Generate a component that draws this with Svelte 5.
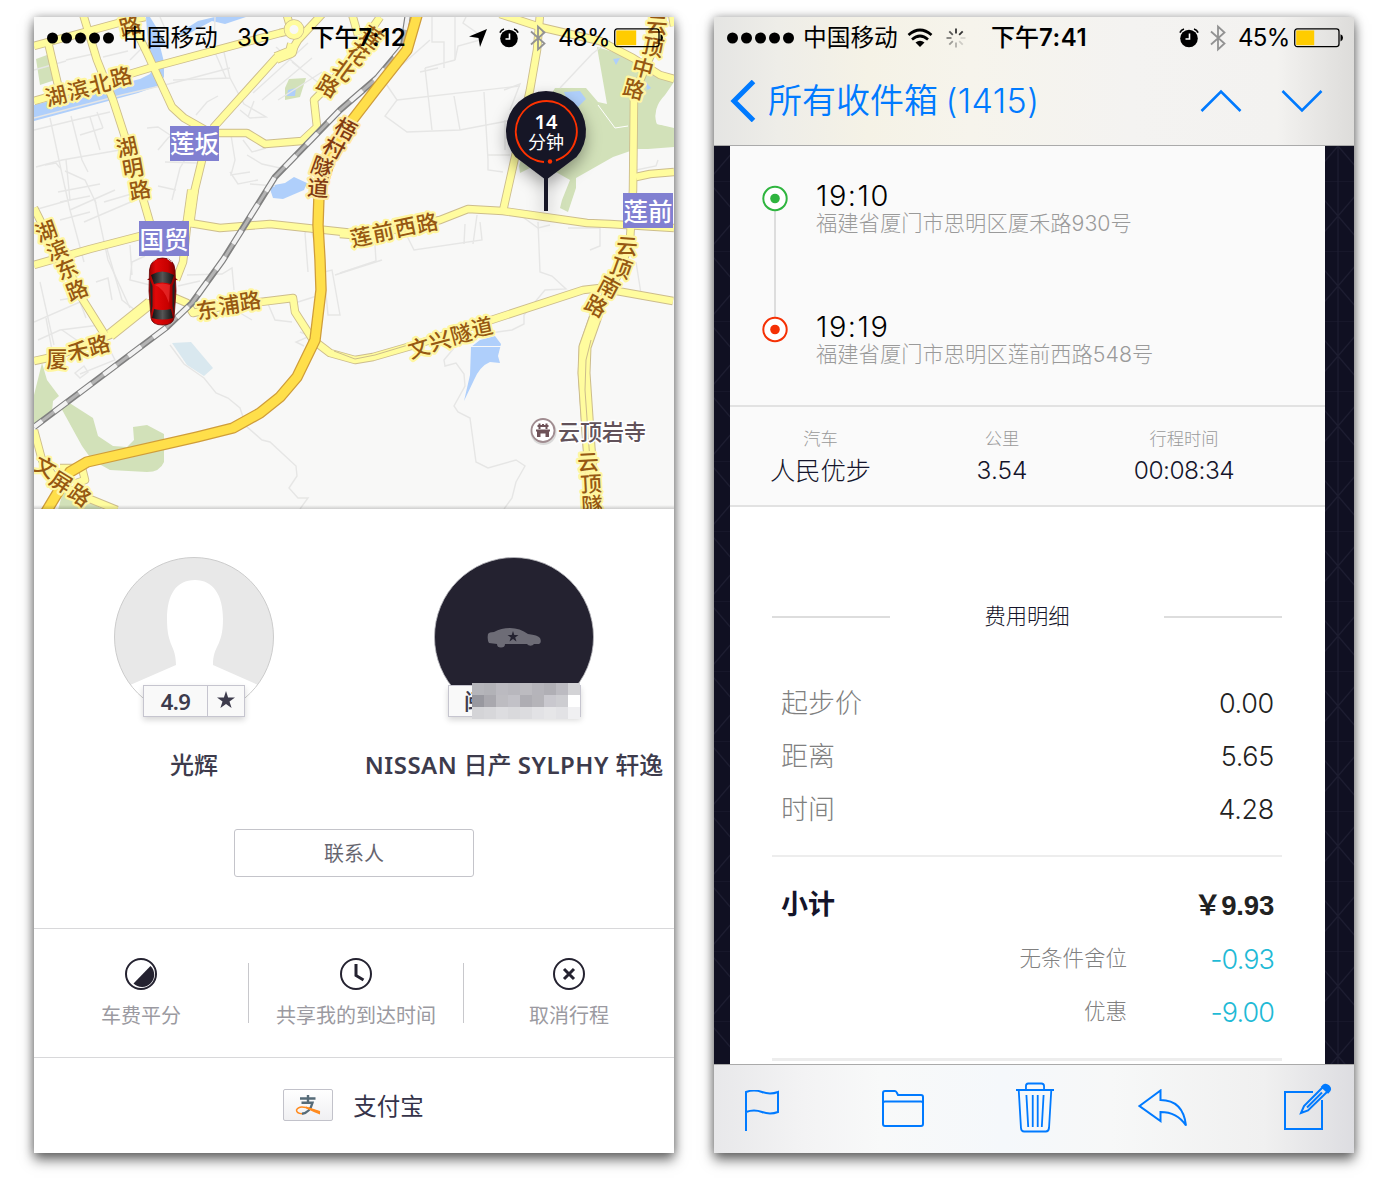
<script>
  // One entry per map label: glyph, centre x, centre y, rotation
  const roadLabels = [
    ['湖', 56, 96, -14], ['滨', 78, 90, -14], ['北', 100, 84, -14], ['路', 121, 77, -14],
    ['湖', 127, 147, -13], ['明', 133, 168, -10], ['路', 140, 190, -10],
    ['湖', 46, 231, -20], ['滨', 57, 250, -20], ['东', 67, 269, -22], ['路', 77, 290, -22],
    ['路', 130, 26, -15],
    ['莲', 372, 37, 36], ['花', 358, 54, 36], ['北', 344, 70, 36], ['路', 328, 86, 30],
    ['莲', 361, 237, -12], ['前', 383, 232, -12], ['西', 405, 227, -12], ['路', 427, 223, -12],
    ['云', 657, 25, 4], ['顶', 653, 47, 12], ['中', 643, 68, 15], ['路', 634, 89, 15],
    ['云', 627, 246, 4], ['顶', 621, 268, 20], ['南', 609, 287, 28], ['路', 596, 306, 28],
    ['东', 207, 310, -9], ['浦', 229, 305, -9], ['路', 250, 301, -9],
    ['厦', 57, 359, 0], ['禾', 78, 351, -12], ['路', 99, 345, -16],
    ['文', 419, 348, -17], ['兴', 440, 341, -15], ['隧', 461, 334, -15], ['道', 482, 327, -12],
    ['云', 588, 462, -3], ['顶', 591, 484, -3], ['隧', 592, 505, -3],
    ['文', 45, 467, 28], ['屏', 61, 482, 32], ['路', 80, 495, 35]
  ];
  const tunnelLabels = [['梧', 346, 129, 28], ['村', 334, 148, 28], ['隧', 322, 167, 20], ['道', 318, 188, 4]];

  const minorRoads = [
    'M66 61 34 70', 'M66 60 93 54', 'M103 57 128 51', 'M34 118 122 95 173 83 230 68',
    'M50 118 60 165 70 210 84 262', 'M36 167 62 160 120 150', 'M71 116 82 160 88 172', 'M34 130 75 120 110 112',
    'M90 117 100 150', 'M97 112 103 128M80 135 103 128M45 165 56 163 60 168', 'M65 171 85 180 96 203M58 192 100 184M60 202 90 196',
    'M70 210 115 190M84 222 140 198M95 200 108 260 130 308', 'M60 220 90 212M104 202 145 190', 'M147 128 158 127 170 135 180 129 168 138 158 150',
    'M173 80 230 78 223 48', 'M214 50 226 78M230 78 244 104 266 117 250 118 240 110', 'M196 115 207 102 218 96',
    'M253 93 308 43M262 100 312 58M278 100 322 72M292 62 320 84', 'M276 47 300 68', 'M254 101 248 117',
    'M172 200 180 168 186 158M176 190 158 186M165 162 198 163', 'M231 135 235 160 231 175 250 172M243 140 252 152 266 148M247 155 262 164 280 168',
    'M230 172 238 184 258 180M250 184 275 186', 'M130 245 132 275M145 256 132 262 130 280 162 288', 'M34 322 80 302 86 318M38 340 60 330 100 325',
    'M40 282 54 345M96 282 108 278 112 300M60 300 90 295M105 242 122 300 140 314', 'M62 330 88 348M75 373 84 366 88 372 80 378Z',
    'M187 275 222 274 232 268 234 290M178 286 200 281', 'M324 272 332 270 340 315 328 315Z M335 275 382 260M300 332 310 336 296 342 304 346',
    'M265 297 275 320 292 322M235 310 252 320', 'M298 302 320 295', 'M314 240 310 226 305 233 308 272',
    'M170 345 184 364 204 378 216 393 228 398 240 408 246 426 262 440 270 442 296 466 297 476 289 488 298 498 308 498 300 509',
    'M378 72 397 100 385 116 407 132 460 130 513 120', 'M397 100 520 86M484 92 488 160 488 170 503 172', 'M425 68 432 130M454 96 460 130',
    'M425 68 455 60M432 17 432 42 444 42 444 68M455 60 458 46 480 40', 'M480 35 463 23 466 17M455 17 455 60M430 40 396 70M420 72 438 68',
    'M504 90 520 84 510 110M505 120 505 150M488 155 510 155', 'M560 88 592 54 610 40', 'M340 273 376 261 374 230',
    'M405 232 414 250 482 240 480 222M465 224 464 244M477 215 473 244', 'M538 222 540 272 552 276 566 289 545 290 535 302 524 315 524 324 512 330 490 333',
    'M454 348 444 360 445 366 456 363 464 374 465 386 454 406 458 412 470 418 476 462 488 468 516 460 525 466 516 482 512 498 504 509',
    'M636 262 642 300M568 228 600 228 600 246 590 250M520 215 538 228 550 225', 'M636 170 656 166 658 160',
    'M105 340 115 360 80 374M46 318 52 350', 'M160 17 170 40M215 17 214 50M150 40 130 60', 'M34 210 70 200 66 160'
  ];

  const secondary = [
    'M34 46 122 22 145 17', 'M48 42 58 85', 'M83 14 97 60 113 100 127 143 152 230', 'M128 14 147 53 172 107 184 118 207 131',
    'M34 101 133 73 153 67 280 33 293 30', 'M324 12 298 40 291 52 276 58 213 128', 'M286 12 290 26',
    'M216 133 247 133 265 144 302 141 317 127 314 100 328 86 350 60 380 17', 'M202 160 193 197 187 226 183 262 176 280',
    'M34 265 90 249 140 236 190 223 220 228 270 224 353 233', 'M340 234 365 236 440 220 468 209 503 211 587 223 610 224 674 228',
    'M34 208 46 232 68 268 83 300 105 335', 'M34 361 57 356 110 335 150 303 173 297 187 303 193 313 220 307 293 298 295 312 313 340 330 353 355 360 373 357 418 344 583 290 600 288 673 301',
    'M664 14 655 45 634 95 633 190 630 240 620 272 595 312 583 347 582 373 587 447 592 509',
    'M500 14 540 27 600 41 633 58 660 75 674 79', 'M540 14 537 50 530 90 503 211', 'M636 177 650 174 674 172', 'M34 430 42 460 60 485 90 499 117 510', 'M60 468 82 468 85 480 74 484', 'M352 14 358 35', 'M672 14 674 26'
  ];
  const wide = ['M293 44 291 52 276 58', 'M193 190 188 226', 'M110 335 150 303'];
  const highway = 'M418 12 407 50 377 88 350 123 330 160 319 195 318 225 320 260 321 290 315 340 297 377 280 397 260 413 233 428 197 437 87 462 70 472 46 512';
  const railway = 'M408 14 403 47 377 78 340 110 275 177 223 260 192 303 167 327 34 427';

  const mosaic = [
    '#b5b5ba', '#b2b2b7', '#bbbac0', '#b8b7bd', '#bcbbc0', '#b5b4ba', '#b0afb5', '#bcbbc1', '#d3d3d6',
    '#98989f', '#a9a8ae', '#bdbcc1', '#c2c1c7', '#aeadb3', '#b5b4b9', '#c9c8ce', '#cdcdd1', '#ffffff',
    '#d4d4d7', '#d7d7da', '#dddde0', '#d9d9dc', '#dcdcdf', '#e2e2e5', '#e6e6e8', '#e2e2e5', '#f0f0f2'
  ];

  const fares = [['起步价', '0.00'], ['距离', '5.65'], ['时间', '4.28']];
  const discounts = [['无条件舍位', '-0.93'], ['优惠', '-9.00']];
  const spokes = [0, 45, 90, 135, 180, 225, 270, 315];
</script>

{#snippet alarm()}
  <svg class="alarm" width="20" height="20" viewBox="0 0 20 20">
    <circle cx="10" cy="10.5" r="8.8" />
    <path d="M.9 4.6Q2 1.8 5 1M19.100 4.600Q18 1.800 15 1" fill="none" stroke="#000" stroke-width="1.6" />
    <path d="M10.500 5.500V11H6.500" fill="none" stroke="#fff" stroke-width="1.600" />
  </svg>
{/snippet}

{#snippet bluetooth()}
  <svg class="bt" width="16" height="28" viewBox="0 0 16 28">
    <path d="M1 7.500 14.500 19.500 8 25.500V2.500L14.500 8.500 1 20.500" fill="none" stroke="#929292" stroke-width="1.800" />
  </svg>
{/snippet}

{#snippet battery(level)}
  <svg class="battery" width="50" height="20" viewBox="0 0 50 20">
    <rect x=".7" y=".9" width="44.300" height="17.700" rx="2.500" fill="none" stroke="#000" stroke-width="1.300" />
    <rect x="2.200" y="2.400" width={level} height="14.800" fill="#fc0" />
    <path d="M46.500 6.200Q49 7 49 9.800T46.500 13.400Z" />
  </svg>
{/snippet}

{#snippet dots()}
  <svg class="dots" width="68" height="12" viewBox="0 0 68 12">
    {#each [5.5, 19.500, 33.500, 47.500, 61.500] as cx}<circle {cx} cy="6" r="5.500" />{/each}
  </svg>
{/snippet}

<main>
  <section class="phone">
    <div class="map">
      <svg class="canvas" width="640" height="492" viewBox="34 17 640 492">
        <defs>
          <linearGradient id="carBody" x1="0" x2="1"><stop offset="0" stop-color="#900" /><stop offset=".25" stop-color="#e00808" /><stop offset=".7" stop-color="#c80000" /><stop offset="1" stop-color="#700" /></linearGradient>
          <linearGradient id="glass" x1="0" x2="1"><stop offset="0" stop-color="#111" /><stop offset=".5" stop-color="#555" /><stop offset="1" stop-color="#111" /></linearGradient>
          <filter id="pinShadow" x="-50%" y="-50%" width="200%" height="200%"><feDropShadow dx="0" dy="7" stdDeviation="8" flood-opacity=".35" /></filter>
        </defs>
        <rect x="34" y="17" width="640" height="492" fill="#f8f8f7" />
        <g fill="#d2e1b9">
          <path d="M36 59 47 55 55 80 40 85Z" />
          <path d="M289 79 306 78 300 97 285 100 285 88Z" />
          <path d="M597 47 633 58 662 76 674 80V86Q650 110 657 124L674 127V147L648 149 636 149 613 157 576 178 576 188 568 212 560 208 562 200 570 180 540 163 520 173 519 166 530 130 555 88 586 88 598 102 607 104Z" />
          <path d="M42 363 47 380 59 396 53 401 52 412 34 425V395Z" />
          <path d="M60 406 68 402 93 418 98 436 113 446 127 447 134 440 133 427 147 425 164 434 164 462Q160 472 147 472L110 470 92 460 82 446Z" />
          <path d="M64 488 104 510H58Z" />
        </g>
        <path d="M598 105 615 128 628 126" stroke="#fff" fill="none" />
        <path d="M657 124Q652 108 665 95L674 82V128Z" fill="#f8f8f7" />
        <g fill="#afcffb">
          <path d="M34 105 140 79 150 74 152 70H155L161 77 163 84 138 93 34 121Z" />
          <path d="M146 17H150L158 30 168 48 160 46 164 62 164 78 158 73 153 60 148 46Z" />
          <path d="M176 35 198 21 223 15 246 17 225 24 212 21 188 34Z" />
          <path d="M269 186 285 183 294 177 307 183 304 190 283 199 273 198Z" />
          <path d="M564 92 580 91 586 99 578 107 568 102ZM613 59 620 58 616 65ZM646 82 651 88 647 90ZM288 90 296 88 295 96 287 96Z" />
          <path d="M471 347 480 340 495 336 501 344 498 356 500 363 490 362Q480 366 474 380L464 401 470 375Z" />
        </g>
        <path d="M470 346.500H501" stroke="#f8f8f7" />
        <path d="M172 343 191 342 213 368 204 376 187 365Z" fill="#d9e8ef" />
        <g fill="none" stroke="#e6e6e5" stroke-width="1.400">{#each minorRoads as d}<path {d} />{/each}</g>
        <g fill="none" stroke-linejoin="round">
          <g stroke="#cdbd8c" stroke-width="8.500">{#each secondary as d}<path {d} />{/each}</g>
          <g stroke="#cdbd8c" stroke-width="12">{#each wide as d}<path {d} />{/each}</g>
          <g stroke="#fffc9e" stroke-width="6.700">{#each secondary as d}<path {d} />{/each}</g>
          <g stroke="#fffc9e" stroke-width="10.200">{#each wide as d}<path {d} />{/each}</g>
          <path d="M595 313 583 347 582 373 587 447 592 509" stroke="#cdbd8c" stroke-width="13" transform="translate(2)" />
          <path d="M595 313 583 347 582 373 587 447 592 509" stroke="#fffc9e" stroke-width="11" transform="translate(2)" />
          <path d="M591 340 586 360 585 390 589 447 594 509M334 351 355 359 375 355 418 342" stroke="#cdbd8c" />
          <circle cx="294" cy="29.500" r="7" stroke="#cdbd8c" stroke-width="6.500" /><circle cx="294" cy="29.500" r="7" stroke="#fffc9e" stroke-width="5" fill="#f8f8f7" />
          <g stroke-linejoin="bevel">
            <path d={railway} stroke="#808080" stroke-width="6.500" />
            <path d={railway} stroke="#b4b4b4" stroke-width="3" />
            <path d={railway} stroke="#f2f2f2" stroke-width="4.200" stroke-dasharray="16 15" />
          </g>
          <path d={highway} stroke="#cf9d3a" stroke-width="11.500" />
          <path d={highway} stroke="#ffdf4a" stroke-width="9" />
        </g>
        <g class="road-label">{#each roadLabels as [ch, x, y, r]}<text transform="translate({x} {y}) rotate({r})" y="8">{ch}</text>{/each}</g>
        <g class="road-label tunnel">{#each tunnelLabels as [ch, x, y, r]}<text transform="translate({x} {y}) rotate({r})" y="8">{ch}</text>{/each}</g>
        <g class="station">
          <rect x="170" y="126" width="49" height="35" /><text x="194.500" y="153">莲坂</text>
          <rect x="139" y="221" width="50" height="35" /><text x="164" y="248.500">国贸</text>
          <rect x="623" y="193" width="50" height="35" /><text x="648" y="220.500">莲前</text>
        </g>
        <g>
          <circle cx="543.500" cy="432" r="13" fill="#bbb" opacity=".5" />
          <circle cx="543" cy="430.500" r="11.500" fill="#fff" stroke="#a08c90" stroke-width="1.800" />
          <path d="M537.500 426H548.500M536 430.500H550M539.500 423.500V429M546.500 423.500V429M543 424V427" stroke="#6e5258" stroke-width="2" fill="none" /><path d="M537 430H549V437H545.500V433.500H540.500V437H537Z" fill="#6e5258" />
          <text class="poi" x="558" y="439.500">云顶岩寺</text>
        </g>
        <g class="car">
          <path d="M147 279.500 152 277V281ZM178 279.500 173 277V281Z" fill="#900" />
          <path d="M149.500 270Q151 258 162.500 258T175 270L176 291 174 318Q173 325 162.500 325T151 318L149 291Z" fill="url(#carBody)" stroke="#600" stroke-width=".8" />
          <path d="M151 275Q162 268 174 275L171 284Q162 281 154 284Z" fill="url(#glass)" />
          <path d="M154 309Q162 311 171 309L173 318Q162 321 152 318Z" fill="url(#glass)" />
          <path d="M150 280 152.500 286V306L151 314ZM175 280 172.500 286V306L174 314Z" fill="#222" />
          <path d="M155 285Q164 288 169 303L170 285Q162 282 155 285Z" fill="#ff4a4a" opacity=".45" />
          <path d="M152 262 157 258.500M172 262 167 258.500" stroke="#ddd" />
        </g>
        <g filter="url(#pinShadow)">
          <path d="M546 180 515.500 157A40 40 0 1 1 576.500 157Z" fill="#171526" />
          <rect x="544" y="176" width="4" height="35" fill="#171526" />
        </g>
        <path d="M544 162A30.500 30.500 0 1 1 556 160.500" fill="none" stroke="#ff3200" stroke-width="2" />
        <circle cx="550" cy="161.500" r="2.200" fill="#ff3200" />
        <g class="pin-text"><text x="546" y="128.500" class="eta">14</text><text x="546" y="148.500">分钟</text></g>
      </svg>
      <div class="status">
        {@render dots()}<span class="carrier">中国移动</span><span class="net">3G</span>
        <span class="time">下午<b>7:12</b></span>
        <svg class="arrow" width="18" height="18" viewBox="0 0 18 18"><path d="M18 0 11 18 9.500 9 0 7.500Z" /></svg>
        {@render alarm()}{@render bluetooth()}<span class="pct">48%</span>{@render battery(20)}
      </div>
    </div>

    <div class="drivers">
      <div class="person">
        <div class="avatar">
          <svg width="160" height="160" viewBox="0 0 160 160">
            <defs><clipPath id="face"><circle cx="80" cy="80" r="79.500" /></clipPath></defs>
            <g clip-path="url(#face)"><rect width="160" height="160" fill="#e8e8e8" /><path d="M81 23C99 23 109 38 109 62C109 90 99 88 99 108L160 135V160H0V135L62 108C62 88 53 90 53 62C53 38 62 23 81 23Z" fill="#fff" /></g>
            <circle cx="80" cy="80" r="79.500" fill="none" stroke="#ccc" />
          </svg>
          <div class="badge rating"><span>4.9</span><i><svg width="18" height="18" viewBox="0 0 18 18"><path d="M9 0 11.100 6.500H18L12.500 10.500 14.600 17 9 13 3.400 17 5.500 10.500 0 6.500H6.900Z" fill="#3d3b4c" /></svg></i></div>
        </div>
        <div class="name">光辉</div>
      </div>
      <div class="person">
        <div class="avatar">
          <svg width="160" height="160" viewBox="0 0 160 160">
            <circle cx="80" cy="80" r="79.500" fill="#242230" stroke="#b8b8bd" stroke-width=".8" />
            <path d="M54 77Q55 75 60 75 67 71 76 71 86 71 94 77 104 78 106 81 108 86 105 87H100A4 3.500 0 0 1 93 87H71A4 3.500 0 0 1 63 87L55 86Q53 83 54 77Z" fill="#6d6c76" />
            <path d="M79 74 80.300 78H84.500L81.200 80.400 82.500 84.500 79 82 75.500 84.500 76.800 80.400 73.500 78H77.700Z" fill="#242230" />
          </svg>
          <div class="badge plate"><span>闽</span></div>
          <div class="mosaic">{#each mosaic as c}<b style:background={c}></b>{/each}</div>
        </div>
        <div class="name"><b>NISSAN</b> 日产 <b>SYLPHY</b> 轩逸</div>
      </div>
    </div>
    <button class="contact">联系人</button>
    <div class="actions">
      <div class="action">
        <svg width="32" height="32" viewBox="0 0 32 32"><circle cx="16" cy="16" r="15" fill="none" stroke="#242230" stroke-width="2" /><path d="M25.500 8A12 12 0 0 1 8.500 25.500Z" fill="#242230" /></svg>
        <span>车费平分</span>
      </div>
      <div class="action mid">
        <svg width="32" height="32" viewBox="0 0 32 32"><circle cx="16" cy="16" r="15" fill="none" stroke="#242230" stroke-width="2" /><path d="M16 6V17.500L23.500 22" fill="none" stroke="#242230" stroke-width="3" /></svg>
        <span>共享我的到达时间</span>
      </div>
      <div class="action">
        <svg width="32" height="32" viewBox="0 0 32 32"><circle cx="16" cy="16" r="15" fill="none" stroke="#242230" stroke-width="2" /><path d="M11 11 21 21M21 11 11 21" fill="none" stroke="#242230" stroke-width="3" /></svg>
        <span>取消行程</span>
      </div>
    </div>
    <div class="pay">
      <span class="card-icon">
        <svg width="26" height="22" viewBox="0 0 26 22"><path d="M5 4.500H20.500M13 1V9M6.500 8.700H17.500Q15 18.500 7 19.700" fill="none" stroke="#566b78" stroke-width="2.400" /><path d="M7 19.700Q1.500 19.500 1.500 16 3.500 11.500 11 13.500L25 18.500" fill="none" stroke="#ff8a1e" stroke-width="1.500" /><path d="M11 12.500 25 17V20.500Q18 18 11 14.300Z" fill="#ff8a1e" /></svg>
      </span>
      <span>支付宝</span>
    </div>
  </section>

  <section class="phone mail">
    <header>
      <div class="status">
        {@render dots()}<span class="carrier">中国移动</span>
        <svg class="wifi" width="26" height="20" viewBox="0 0 26 20"><path d="M1.500 7Q13-3 24.500 7M5 11.500Q13 4.500 21 11.500" fill="none" stroke="#000" stroke-width="2.700" /><path d="M8.500 14.500Q13 11 17.500 14.500L13 19Z" /></svg>
        <svg class="spin" width="20" height="20" viewBox="-10 -10 20 20">{#each spokes as a, i}<path d="M0-4.500V-9.500" transform="rotate({a})" stroke="#333" stroke-width="1.800" opacity={[1, 1, 0.15, 0.2, 0.35, 0.45, 0.6, 0.8][i]} />{/each}</svg>
        <span class="time">下午<b>7:41</b></span>
        {@render alarm()}{@render bluetooth()}<span class="pct">45%</span>{@render battery(18)}
      </div>
      <nav>
        <svg width="26" height="42" viewBox="0 0 26 42"><path d="M23.500 1.500 4 21 23.500 40.500" fill="none" stroke="#007aff" stroke-width="5" /></svg>
        <span class="inbox">所有收件箱 <b>(1415)</b></span>
        <svg class="up" width="42" height="24" viewBox="0 0 42 24"><path d="M1.500 22 21 2.500 40.500 22" fill="none" stroke="#007aff" stroke-width="2.600" /></svg>
        <svg class="down" width="42" height="24" viewBox="0 0 42 24"><path d="M1.500 2 21 21.500 40.500 2" fill="none" stroke="#007aff" stroke-width="2.600" /></svg>
      </nav>
    </header>

    <div class="body">
      <svg class="pattern" width="640" height="919">
        <defs><pattern id="tiles" width="60" height="70" patternUnits="userSpaceOnUse" patternTransform="translate(-6 35)"><path d="M0 0H60M30 0V70M0 0 60 70M60 0 0 70" fill="none" stroke="#1d1d31" stroke-width="1.200" /></pattern></defs>
        <rect width="640" height="919" fill="#101022" /><rect width="640" height="919" fill="url(#tiles)" />
      </svg>
      <article>
        <div class="route">
          <svg width="26" height="158" viewBox="0 0 26 158"><path d="M13 26V132" stroke="#ddd" stroke-width="2" />
            <g fill="#fff" stroke-width="2"><circle cx="13" cy="13.500" r="11.700" stroke="#2fb53f" /><circle cx="13" cy="144.500" r="11.700" stroke="#f53105" /></g>
            <circle cx="13" cy="13.500" r="4.800" fill="#2fb53f" /><circle cx="13" cy="144.500" r="4.800" fill="#f53105" /></svg>
          <div class="stops">
            <div class="stop"><b>19:10</b><span>福建省厦门市思明区厦禾路930号</span></div>
            <div class="stop"><b>19:19</b><span>福建省厦门市思明区莲前西路548号</span></div>
          </div>
        </div>
        <div class="stats">
          <div><small>汽车</small><span class="cn">人民优步</span></div>
          <div><small>公里</small><span>3.54</span></div>
          <div><small>行程时间</small><span class="dur">00:08:34</span></div>
        </div>
        <div class="heading"><i></i><span>费用明细</span><i></i></div>
        <div class="fares">{#each fares as [k, v]}<div class="fare"><span>{k}</span><span class="num">{v}</span></div>{/each}</div>
        <div class="totals">
          <div class="fare sub"><b>小计</b><b class="num">￥9.93</b></div>
          {#each discounts as [k, v]}<div class="fare off"><span>{k}</span><span class="num">{v}</span></div>{/each}
        </div>
      </article>
    </div>

    <footer>
      <svg class="flag" width="34" height="41" viewBox="0 0 34 41"><path d="M1 41V2Q9-1 17 2T33 2V22Q25 25 17 22T1 22" /></svg>
      <svg class="folder" width="42" height="37" viewBox="0 0 42 37"><path d="M1 34V3Q1 1 3 1H13Q14 1 15 3L16 5H39Q41 5 41 7V34Q41 36 39 36H3Q1 36 1 34ZM1 13Q1 11.500 3 11.500H39Q41 11.500 41 13" /></svg>
      <svg class="trash" width="38" height="51" viewBox="1 0 42 51" preserveAspectRatio="none"><path d="M0 8H44M12 8V4Q12 1.500 14.500 1.500H29Q32 1.500 32 4V8M4 8 6.500 46Q6.700 49.500 10 49.500H34Q37 49.500 37.500 46L40 8M12.500 13 14.500 45M19.500 13V45M25 13V45M31.500 13 29.500 45" /></svg>
      <svg class="reply" width="50" height="38" viewBox="0 0 50 38"><path d="M1.500 17 22.500 1.500V11Q45 11 48 36.500 39 23 22.500 23V32Z" /></svg>
      <svg class="compose" width="48" height="48" viewBox="0 0 48 48"><path d="M29 9H1V46H38V17M17 30 20 23 39 4 43.500 8.500 24 27.500ZM23 24.500 38 9.500" /><path d="M38 4Q41 0 44.500 3T44 9.500Z" class="solid" /></svg>
    </footer>
  </section>
</main>

<style>
  :global(body) { margin: 0; background: #fff; }
  main { box-sizing: border-box; width: 1388px; height: 1179px; padding: 17px 34px 26px; display: flex; gap: 40px; overflow: hidden; font-family: "Noto Sans", "Noto Sans CJK SC", sans-serif; }
  svg { display: block; flex: none; }
  .phone { width: 640px; height: 1136px; flex: none; background: #fff; display: flex; flex-direction: column; box-shadow: 0 7px 12px rgba(0, 0, 0, .55), 0 0 9px rgba(0, 0, 0, .28); }
  .map { position: relative; width: 640px; height: 492px; overflow: hidden; }
  .map::after { content: ""; position: absolute; inset: auto 0 0; height: 4px; background: linear-gradient(transparent, rgba(0, 0, 0, .17)); }
  .canvas { font-family: "Noto Sans CJK SC", sans-serif; }
  .road-label text { font-size: 21.500px; font-weight: 500; fill: #965812; stroke: #fff6a0; stroke-width: 4.500px; paint-order: stroke; stroke-linejoin: round; text-anchor: middle; }
  .road-label.tunnel text { fill: #823b12; stroke: #ffeaa0; }
  .station rect { fill: #8180d1; }
  .station text { font-size: 24.500px; fill: #fff; font-weight: 500; text-anchor: middle; }
  .poi { font-size: 22px; font-weight: 500; fill: #62525a; stroke: #fff; stroke-width: 3px; paint-order: stroke; }
  .pin-text { fill: #fff; text-anchor: middle; font-size: 18px; font-family: "Noto Sans", "Noto Sans CJK SC", sans-serif; }
  .pin-text .eta { font-size: 20px; font-weight: 600; }

  .status { height: 42px; display: flex; align-items: center; padding-left: 13px; font: 24px/42px Inter, "Noto Sans CJK SC", sans-serif; color: #000; white-space: nowrap; }
  .map .status { position: absolute; inset: 0 0 auto; }
  .status span { flex: none; }
  .carrier { width: 94px; margin-left: 8px; font-size: 23.700px; }
  .net { width: 34px; margin-left: 20px; font-size: 24px; }
  .time { width: 96px; margin-left: 39.500px; font-weight: 500; }
  .time b { font-weight: 600; letter-spacing: .5px; }
  .arrow { margin-left: 62.500px; }
  .alarm { margin-left: 12px; }
  .bt { margin-left: 11px; }
  .pct { width: 50px; margin-left: 12px; letter-spacing: -.7px; }
  .battery { margin-left: 6px; }
  .wifi { margin-left: 10px; }
  .spin { margin-left: 13px; }
  .mail .time { margin-left: 25px; }
  .mail .alarm { margin-left: 92px; }

  .drivers { display: grid; grid-template-columns: 320px 320px; padding-top: 48px; color: #3d3b4c; }
  .person { display: flex; flex-direction: column; align-items: center; }
  .avatar { position: relative; width: 160px; height: 160px; }
  .badge { position: absolute; box-sizing: border-box; top: 128px; height: 32px; display: flex; background: #f9f9f9; border: 1px solid #c6c5cf; box-shadow: 0 3px 6px rgba(0, 0, 0, .16); font: 500 22px/29px "Noto Sans", "Noto Sans CJK SC", sans-serif; }
  .rating { left: 29px; width: 102px; }
  .rating span { width: 63px; text-align: center; border-right: 1px solid #c6c5cf; font-weight: 600; font-size: 22px; line-height: 30px; letter-spacing: -.6px; }
  .rating i { flex: 1; display: grid; place-items: center; padding-bottom: 2px; }
  .plate { left: 14px; width: 133px; padding-left: 15px; }
  .mosaic { position: absolute; left: 38px; top: 126px; display: grid; grid-template-columns: repeat(9, 12px); grid-auto-rows: 12px; }
  .name { margin-top: 32px; height: 33px; font-size: 24px; line-height: 32px; font-weight: 500; white-space: nowrap; }
  .name b { font-weight: 600; letter-spacing: .5px; }
  .contact { box-sizing: border-box; width: 240px; height: 48px; margin: 47px auto 51px; padding: 0; background: #fff; border: 1px solid #c4c4ca; border-radius: 3px; font: 20px/46px "Noto Sans CJK SC", sans-serif; color: #66656f; flex: none; }
  .actions { height: 128px; border: solid #d8d8da; border-width: 1px 0; display: grid; grid-template-columns: 214px 216px 210px; align-items: center; }
  .action { height: 60px; padding-top: 0; display: flex; flex-direction: column; align-items: center; font: 20px/30px "Noto Sans CJK SC", sans-serif; color: #9b9aa1; }
  .action svg { margin-top: -5px; }
  .action span { margin-top: 10px; white-space: nowrap; }
  .mid { border: solid #c8c8cc; border-width: 0 1px; box-sizing: border-box; }
  .pay { flex: 1; display: flex; align-items: center; justify-content: center; gap: 20px; padding: 0 1px 2px 0; font: 23.500px/30px "Noto Sans CJK SC", sans-serif; color: #35334a; }
  .card-icon { box-sizing: border-box; width: 50px; height: 32px; border: 1px solid #c2c2ca; border-radius: 2px; background: linear-gradient(#fff, #f0f0f2); display: grid; place-items: center; }

  header { box-sizing: border-box; height: 129px; border-bottom: 1px solid #aaa; background: linear-gradient(90deg, #e5e5e3 0, #eeede8 10%, #f5f2e6 24%, #f6f4ec 40%, #f4f3f1 65%, #f3f2f0 88%, #dddcda 100%); }
  nav { height: 84px; display: flex; align-items: center; padding-left: 16px; color: #007aff; }
  .inbox { width: 420px; margin-left: 12px; font: 350 34px/60px Inter, "Noto Sans CJK SC", sans-serif; white-space: nowrap; }
  .inbox b { font-weight: 350; margin-left: -2px; letter-spacing: .4px; }
  .up { margin-left: 12px; }
  .down { margin-left: 39px; }
  .body { position: relative; height: 918px; overflow: hidden; }
  .pattern { position: absolute; inset: 0; }
  article { position: relative; width: 595px; height: 919px; margin-left: 16px; background: #fff; font-family: Inter, "Noto Sans CJK SC", sans-serif; font-weight: 300; overflow: hidden; }
  .route { height: 261px; box-sizing: border-box; padding: 39px 0 0 32px; display: flex; background: #fafafa; border-bottom: 2px solid #e2e2e2; }
  .stops { margin-left: 28px; margin-top: -6px; }
  .stop { height: 131px; display: flex; flex-direction: column; white-space: nowrap; }
  .stop b { font-weight: 300; font-size: 29px; line-height: 32px; padding-top: 1px; margin-bottom: -1px; color: #000; letter-spacing: 1.500px; }
  .stop span { font-size: 21.300px; line-height: 24px; color: #9a9a9a; }
  .stats { height: 100px; box-sizing: border-box; padding: 19px 0 0; border-bottom: 2px solid #e2e2e2; background: #fafafa; display: grid; grid-template-columns: 181px 182px 182px; color: #14142a; }
  .stats div { display: flex; flex-direction: column; align-items: center; font-size: 24.500px; line-height: 37px; }
  .stats small { font-size: 17.300px; line-height: 26px; color: #999; }
  .stats .cn { font-size: 25.300px; }
  .dur { letter-spacing: -.5px; }
  .heading { margin: 95px 43px 0 42px; height: 30px; display: flex; align-items: center; justify-content: space-between; font-size: 21.300px; color: #14142a; }
  .heading i { width: 118px; height: 2px; background: #ddd; }
  .heading span { margin-top: -5px; }
  .fares { margin: 43px 43px 0 42px; padding-bottom: 21px; border-bottom: 2px solid #ededed; }
  .fare { height: 53px; padding: 0 8px 0 9px; display: flex; align-items: center; justify-content: space-between; font-size: 27px; color: #808080; white-space: nowrap; }
  .num { color: #222; padding-top: 3px; letter-spacing: -.3px; }
  .totals { margin: 0 43px 0 42px; padding-top: 18px; height: 204px; box-sizing: border-box; border-bottom: 3px solid #ededed; }
  .sub { color: #14142a; height: 55px; }
  .sub b { font-weight: 700; }
  .sub .num { font-family: "Liberation Sans", "Noto Sans CJK SC", sans-serif; font-size: 27.500px; letter-spacing: -.2px; color: #222; padding-top: 1px; }
  .off { justify-content: flex-end; font-size: 21.500px; }
  .off .num { width: 147px; text-align: right; font-size: 27px; color: #1fbad6; padding-top: 6px; letter-spacing: -.9px; }
  footer { flex: 1; box-sizing: border-box; border-top: 1px solid #aaa; display: flex; align-items: center; padding-left: 31px; background: linear-gradient(90deg, #e8e8ea 0, #f3f3f4 14%, #f8f9f9 26%, #f5f8fb 45%, #f7f8f8 62%, #f0f0f0 86%, #dddde1 100%); }
  footer path { fill: none; stroke: #007aff; stroke-width: 2; }
  footer .solid { fill: #007aff; }
  .flag { margin-top: 3px; }
  .folder { margin: -2px 0 0 103px; }
  .trash { margin: -3px 0 0 92px; }
  .reply { margin: -2px 0 0 84px; }
  .compose { margin: -5px 0 0 96px; }
</style>
